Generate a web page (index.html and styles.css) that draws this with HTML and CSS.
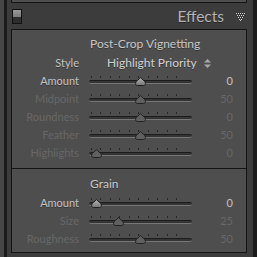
FILE: index.html
```html
<!DOCTYPE html>
<html lang="en">
<head>
  <meta charset="UTF-8" />
  <title>Effects</title>
  <link rel="stylesheet" href="styles.css">
</head>
<body>

  <div class="frame">
    <div class="edge-light"></div>
    <div class="edge-dark"></div>

    <div class="column">
      <!-- bottom of the panel above -->
      <div class="prev-panel"></div>

      <!-- Panel header -->
      <div class="panel-head">
        <span class="toggle"><span class="toggle-on"></span></span>
        <span class="panel-title">Effects</span>
        <svg class="collapse" width="10" height="8" viewBox="0 0 10 8">
          <g fill="#d0d0d0">
            <rect x="0" y="0" width="1" height="1"/><rect x="2" y="0" width="1" height="1"/><rect x="4" y="0" width="1" height="1"/><rect x="6" y="0" width="1" height="1"/><rect x="8" y="0" width="1" height="1"/>
            <rect x="1" y="2" width="1" height="1"/><rect x="3" y="2" width="1" height="1"/><rect x="5" y="2" width="1" height="1"/><rect x="7" y="2" width="1" height="1"/>
            <rect x="2" y="4" width="1" height="1"/><rect x="4" y="4" width="1" height="1"/><rect x="6" y="4" width="1" height="1"/>
            <rect x="3" y="6" width="1" height="1"/><rect x="5" y="6" width="1" height="1"/>
            <rect x="4" y="7" width="1" height="1"/>
          </g>
        </svg>
      </div>

      <div class="panel">

        <!-- Post-Crop Vignetting -->
        <section class="group">
          <h3>Post-Crop Vignetting</h3>
          <div class="row">
            <span class="label">Style</span>
            <span class="select">Highlight Priority
              <svg width="7" height="9" viewBox="0 0 7 9"><path d="M3.5 0 L7 3.5 H0 Z M0 5.5 H7 L3.5 9 Z" fill="#a8a8a8"/></svg>
            </span>
          </div>
          <div class="row">
            <span class="label">Amount</span>
            <div class="slider"><div class="ticks"></div><div class="track"></div><span class="thumb" style="left: 51px"></span></div>
            <span class="value">0</span>
          </div>
          <div class="row dim">
            <span class="label">Midpoint</span>
            <div class="slider"><div class="ticks"></div><div class="track"></div><span class="thumb" style="left: 51px"></span></div>
            <span class="value">50</span>
          </div>
          <div class="row dim">
            <span class="label">Roundness</span>
            <div class="slider"><div class="ticks"></div><div class="track"></div><span class="thumb" style="left: 51px"></span></div>
            <span class="value">0</span>
          </div>
          <div class="row dim">
            <span class="label">Feather</span>
            <div class="slider"><div class="ticks"></div><div class="track"></div><span class="thumb" style="left: 51px"></span></div>
            <span class="value">50</span>
          </div>
          <div class="row dim">
            <span class="label">Highlights</span>
            <div class="slider"><div class="ticks"></div><div class="track"></div><span class="thumb" style="left: 7px"></span></div>
            <span class="value">0</span>
          </div>
        </section>

        <!-- Grain -->
        <section class="group grain">
          <h3>Grain</h3>
          <div class="row">
            <span class="label">Amount</span>
            <div class="slider"><div class="ticks"></div><div class="track"></div><span class="thumb" style="left: 7px"></span></div>
            <span class="value">0</span>
          </div>
          <div class="row dim">
            <span class="label">Size</span>
            <div class="slider"><div class="ticks"></div><div class="track"></div><span class="thumb" style="left: 29px"></span></div>
            <span class="value">25</span>
          </div>
          <div class="row dim">
            <span class="label">Roughness</span>
            <div class="slider"><div class="ticks"></div><div class="track"></div><span class="thumb" style="left: 51px"></span></div>
            <span class="value">50</span>
          </div>
        </section>

      </div>
    </div>

    <div class="edge-dark"></div>
  </div>

</body>
</html>
```

FILE: styles.css
```css
/* Base */
body {
  margin: 0;
  background: #1b1b1b;
  font-family: 'Lato', 'Open Sans', sans-serif;
  color: #c6c6c6;
}

.frame {
  display: flex;
  height: 257px;
  overflow: hidden;
}

.edge-light {
  width: 4px;
  background: #474747;
}

.edge-dark {
  width: 3px;
  background: #1b1b1b;
}

.frame > .edge-dark:last-child {
  width: 4px;
}

.column {
  width: 236px;
  padding: 0 6px 0 4px;
  background: #3c3c3c;
}

.prev-panel {
  height: 2px;
  background: #4e4e4e;
  border: 1px solid #141414;
  border-top: none;
}

/* Panel header */
.panel-head {
  display: flex;
  align-items: center;
  height: 26px;
}

.toggle {
  display: flex;
  flex-direction: column;
  width: 8px;
  height: 13px;
  margin: 1px 0 0 1px;
  border: 1px solid #111;
  background: #2e2e2e;
}

.toggle-on {
  height: 7px;
  background: linear-gradient(#9a9a9a, #7a7a7a);
}

.panel-title {
  margin-left: auto;
  font-size: 15.5px;
  color: #b4b4b4;
  text-shadow: 0 1px 0 rgba(0, 0, 0, 0.4);
}

.collapse {
  margin: 1px 1px 0 12px;
}

/* Panel body */
.panel {
  background: #4e4e4e;
  border: 1px solid #141414;
  height: 222px;
}

.group {
  padding: 6px 0;
  border-bottom: 1px solid #141414;
}

.group.grain {
  padding: 7px 0 4px;
  border-bottom: none;
}

.group h3 {
  margin: 0 0 2px;
  padding-left: 78px;
  font-size: 12px;
  font-weight: normal;
  line-height: 16px;
  color: #c8c8c8;
  text-shadow: 0 1px 0 rgba(0, 0, 0, 0.35);
}

.row {
  display: grid;
  grid-template-columns: 67px 103px 31px;
  column-gap: 10px;
  height: 18px;
  line-height: 18px;
  font-size: 11px;
}

.label {
  text-align: right;
  color: #c4c4c4;
  text-shadow: 0 1px 0 rgba(0, 0, 0, 0.35);
}

.value {
  text-align: right;
  color: #c4c4c4;
}

.row.dim .label,
.row.dim .value {
  color: #686868;
  text-shadow: none;
}

.select {
  grid-column: 2 / 4;
  display: flex;
  align-items: center;
  gap: 7px;
  padding-left: 18px;
  font-size: 12px;
  color: #d2d2d2;
  text-shadow: 0 1px 0 rgba(0, 0, 0, 0.35);
}

/* Slider */
.slider {
  position: relative;
}

.ticks {
  height: 2px;
  margin: 4px 6px 0 2px;
  background: repeating-linear-gradient(to right, #262626 0 1px, transparent 1px 9.5px);
}

.track {
  height: 2px;
  margin-top: 2px;
  border-radius: 2px;
  background: #353535;
  border-top: 1px solid #1c1c1c;
  border-bottom: 1px solid #767676;
}

.thumb {
  position: absolute;
  top: 5px;
  width: 11px;
  height: 9px;
  margin-left: -5px;
  background: url("data:image/svg+xml,%3Csvg xmlns='http://www.w3.org/2000/svg' width='11' height='9' viewBox='0 0 11 9'%3E%3Cdefs%3E%3ClinearGradient id='g' x1='0' y1='0' x2='0' y2='1'%3E%3Cstop offset='0' stop-color='%23b4b4b4'/%3E%3Cstop offset='1' stop-color='%23767676'/%3E%3C/linearGradient%3E%3C/defs%3E%3Cpath d='M5.5 .5 C6.8 2.6 10.5 4 10.5 6.4 C10.5 7.9 9.6 8.5 8.4 8.5 H2.6 C1.4 8.5 .5 7.9 .5 6.4 C.5 4 4.2 2.6 5.5 .5Z' fill='url(%23g)' stroke='%231e1e1e'/%3E%3C/svg%3E") no-repeat;
}

.row.dim .thumb {
  background: url("data:image/svg+xml,%3Csvg xmlns='http://www.w3.org/2000/svg' width='11' height='9' viewBox='0 0 11 9'%3E%3Cpath d='M5.5 .5 C6.8 2.6 10.5 4 10.5 6.4 C10.5 7.9 9.6 8.5 8.4 8.5 H2.6 C1.4 8.5 .5 7.9 .5 6.4 C.5 4 4.2 2.6 5.5 .5Z' fill='%23606060' stroke='%23222'/%3E%3C/svg%3E") no-repeat;
}
```
